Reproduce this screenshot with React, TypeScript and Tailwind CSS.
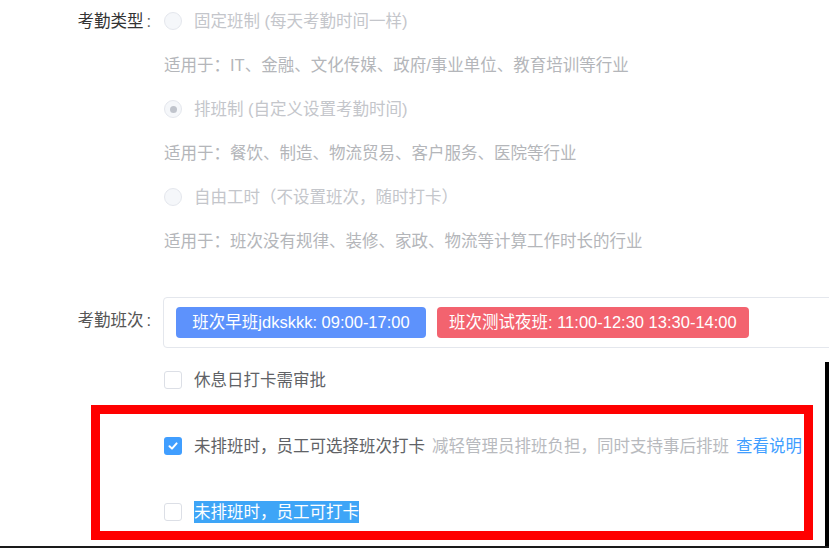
import * as React from 'react';

const font = "font-['Liberation_Sans','Noto_Sans_CJK_SC',sans-serif]";

function Radio({ checked }: { checked?: boolean }) {
  return (
    <span className="flex size-[18px] shrink-0 items-center justify-center rounded-full border border-[#e4e7ed] bg-[#f5f7fa]">
      {checked && <span className="size-[7px] rounded-full bg-[#c0c4cc]" />}
    </span>
  );
}

function Checkbox({ checked }: { checked?: boolean }) {
  if (checked) {
    return (
      <span className="flex size-[18px] shrink-0 items-center justify-center rounded-[3px] bg-[#409eff]">
        <svg viewBox="0 0 12 12" className="size-[12px]" fill="none" stroke="white" strokeWidth="2" strokeLinecap="round" strokeLinejoin="round">
          <polyline points="2.5,6.2 5,8.6 9.6,3.4" />
        </svg>
      </span>
    );
  }
  return <span className="size-[18px] shrink-0 rounded-[3px] border border-[#dcdfe6] bg-white" />;
}

const types = [
  { label: '固定班制 (每天考勤时间一样)', hint: '适用于：IT、金融、文化传媒、政府/事业单位、教育培训等行业' },
  { label: '排班制 (自定义设置考勤时间)', hint: '适用于：餐饮、制造、物流贸易、客户服务、医院等行业', checked: true },
  { label: '自由工时（不设置班次，随时打卡）', hint: '适用于：班次没有规律、装修、家政、物流等计算工作时长的行业' },
];

export default function App() {
  return (
    <div className={`relative h-[548px] w-[829px] overflow-hidden bg-white text-[16.5px] ${font}`}>
      {/* 考勤类型 */}
      <div className="mt-[-1px] flex">
        <div className="flex h-11 w-[151px] shrink-0 items-center justify-end leading-none text-[#333]">
          考勤类型<span className="ml-[3px] text-[#666]">:</span>
        </div>
        <div className="ml-[13px] flex flex-col">
          {types.map((t) => (
            <React.Fragment key={t.label}>
              <div className="flex h-11 items-center gap-[12px] leading-none text-[#c4c6cb]">
                <Radio checked={t.checked} />
                <span>{t.label}</span>
              </div>
              <div className="flex h-11 items-center leading-none text-[#b4b6ba]">{t.hint}</div>
            </React.Fragment>
          ))}
        </div>
      </div>

      {/* 考勤班次 */}
      <div className="mt-[34px] flex">
        <div className="flex w-[151px] shrink-0 items-center justify-end pb-[4px] leading-none text-[#555]">
          考勤班次<span className="ml-[3px]">:</span>
        </div>
        <div className="ml-[12px] flex w-[700px] shrink-0 gap-[11px] rounded-[4px] border border-[#e4e7ed] px-[12px] py-[9px]">
          <span className="flex h-[31px] w-[250px] items-center justify-center rounded-[4px] bg-[#5d92fc] leading-none text-white">
            班次早班jdkskkk: 09:00-17:00
          </span>
          <span className="flex h-[31px] items-center rounded-[4px] bg-[#f3636f] px-[12px] leading-none text-white">
            班次测试夜班: 11:00-12:30 13:30-14:00
          </span>
        </div>
      </div>

      <div className="ml-[164px] flex flex-col">
        <div className="mt-[10px] flex h-11 items-center gap-[12px] leading-none text-[#606266]">
          <Checkbox />
          <span>休息日打卡需审批</span>
        </div>
        <div className="mt-[22px] flex h-11 items-center gap-[12px] leading-none text-[#606266]">
          <Checkbox checked />
          <span>
            未排班时，员工可选择班次打卡
            <span className="ml-[7px] text-[#b8babe]">减轻管理员排班负担，同时支持事后排班</span>
            <span className="ml-[7px] text-[#409eff]">查看说明</span>
          </span>
        </div>
        <div className="mt-[22px] flex h-11 items-center gap-[12px] leading-none text-[#606266]">
          <Checkbox />
          <span className="bg-[#3ea5f7] py-[3px] text-white">未排班时，员工可打卡</span>
        </div>
      </div>

      {/* red annotation box */}
      <div className="absolute left-[91px] top-[405px] h-[135px] w-[722px] border-[9px] border-[#ff0000]" />
      {/* window edges */}
      <div className="absolute bottom-0 right-0 top-[362px] w-[4px] bg-black" />
      <div className="absolute bottom-0 left-0 right-0 h-[2px] bg-[#1a1a1a]" />
    </div>
  );
}
